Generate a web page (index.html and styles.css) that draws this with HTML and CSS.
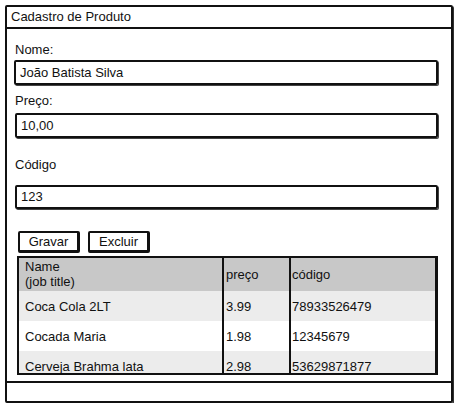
FILE: index.html
```html
<!DOCTYPE html>
<html>
<head>
<meta charset="utf-8">
<link rel="stylesheet" href="styles.css">
</head>
<body>
<div class="window">
  <div class="titlebar">Cadastro de Produto</div>
  <div class="content">
    <div class="label l-nome">Nome:</div>
    <div class="input i-nome">João Batista Silva</div>
    <div class="label l-preco">Preço:</div>
    <div class="input i-preco">10,00</div>
    <div class="label l-codigo">Código</div>
    <div class="input i-codigo">123</div>
    <div class="buttons">
      <div class="btn">Gravar</div>
      <div class="btn">Excluir</div>
    </div>
    <div class="tablewrap">
      <table class="grid">
        <colgroup><col class="c1"><col class="c2"><col class="c3"></colgroup>
        <tr class="head"><td>Name<br>(job title)</td><td>preço</td><td>código</td></tr>
        <tr class="alt"><td>Coca Cola 2LT</td><td>3.99</td><td>78933526479</td></tr>
        <tr><td>Cocada Maria</td><td>1.98</td><td>12345679</td></tr>
        <tr class="alt"><td>Cerveja Brahma lata</td><td>2.98</td><td>53629871877</td></tr>
      </table>
    </div>
  </div>
  <div class="statusbar"></div>
</div>
</body>
</html>
```

FILE: styles.css
```css
html, body {
  margin: 0;
  padding: 0;
  background: #fff;
}
body {
  font-family: "Liberation Sans", Arial, sans-serif;
  font-size: 13px;
  color: #111;
  padding: 5px 0 0 5px;
}
.window {
  width: 444px;
  height: 394px;
  border: 2px solid #111;
  border-radius: 2px;
  display: flex;
  flex-direction: column;
  box-shadow: 1px 1px 0 #333;
}
.titlebar {
  height: 20px;
  line-height: 20px;
  padding-left: 4px;
  border-bottom: 2px solid #111;
  flex: none;
}
.content {
  flex: 1;
  padding: 0 13px 0 7px;
  display: flex;
  flex-direction: column;
}
.label {
  height: 16px;
  line-height: 16px;
  padding-left: 1px;
}
.l-nome { margin-top: 13px; }
.l-preco { margin-top: 8px; }
.l-codigo { margin-top: 19px; }
.input {
  border: 2px solid #111;
  border-radius: 2px;
  line-height: 21px;
  padding-left: 4px;
  box-shadow: 1px 1px 0 #444;
}
.i-nome { margin-top: 2px; height: 21px; }
.i-preco { margin-top: 4px; height: 21px; margin-left: 1px; }
.i-codigo { margin-top: 12px; height: 20px; line-height: 20px; margin-left: 1px; }
.buttons {
  margin-top: 22px;
  margin-left: 4px;
  display: flex;
  gap: 8px;
}
.btn {
  width: 57px;
  height: 17px;
  line-height: 17px;
  text-align: center;
  border: 2px solid #111;
  border-right-width: 3px;
  border-bottom-width: 3px;
  border-radius: 2px;
}
.tablewrap {
  margin-top: 3px;
  margin-left: 3px;
  width: 416px;
  height: 115px;
  border: 2px solid #111;
  border-right-width: 3px;
  overflow: hidden;
}
.grid {
  width: 100%;
  border-collapse: collapse;
  table-layout: fixed;
}
.c1 { width: 204px; }
.c2 { width: 67px; }
.grid td {
  padding: 0 0 0 5px;
  vertical-align: middle;
  border-left: 2px solid #111;
  height: 30px;
  line-height: 15px;
  white-space: nowrap;
}
.grid td:first-child { border-left: none; padding-left: 6px; }
.grid td:nth-child(2) { padding-left: 2px; }
.grid td:nth-child(3) { padding-left: 1px; }
.head td {
  background: #c8c8c8;
  height: 32px;
  padding-bottom: 1px;
}
.alt td { background: #ececec; }
.statusbar {
  flex: none;
  height: 18px;
  border-top: 2px solid #111;
}
```
